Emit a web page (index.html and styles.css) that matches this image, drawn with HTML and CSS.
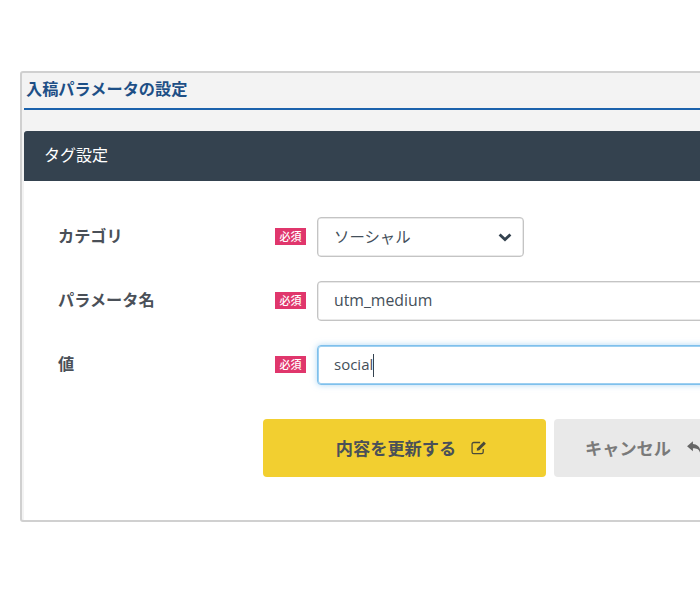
FILE: index.html
```html
<!DOCTYPE html>
<html lang="ja">
<head>
<meta charset="utf-8">
<title>入稿パラメータの設定</title>
<link rel="stylesheet" href="styles.css">
</head>
<body>
<main class="card">
  <h1 class="page-title">入稿パラメータの設定</h1>
  <section class="panel">
    <h2 class="panel-head">タグ設定</h2>
    <form class="panel-body">
      <div class="row">
        <span class="label">カテゴリ</span>
        <span class="badge">必須</span>
        <div class="control select">
          <span class="select-text">ソーシャル</span>
          <svg class="chevron" viewBox="0 0 14 10" width="14" height="10"><path d="M1.6 2.4 7 7.6l5.4-5.2" fill="none" stroke="#34424f" stroke-width="2.8"/></svg>
        </div>
      </div>
      <div class="row">
        <span class="label">パラメータ名</span>
        <span class="badge">必須</span>
        <div class="control wide">utm_medium</div>
      </div>
      <div class="row">
        <span class="label">値</span>
        <span class="badge">必須</span>
        <div class="control wide focus">social<span class="caret"></span></div>
      </div>
      <div class="actions">
        <button type="button" class="btn primary">内容を更新する
          <svg class="icon" viewBox="0 0 16 14" width="17" height="15"><path d="M11.5 8.5v2.7a1.6 1.6 0 0 1-1.6 1.6H2.6A1.6 1.6 0 0 1 1 11.2V3.9a1.6 1.6 0 0 1 1.6-1.6h6" fill="none" stroke="#4a4a3a" stroke-width="1.2"/><path d="M5.8 7.6 12 1.4l2 2-6.2 6.2-2.4.4z" fill="#4a4a3a"/></svg>
        </button>
        <button type="button" class="btn cancel">キャンセル
          <svg class="icon" viewBox="0 0 16 14" width="17" height="15"><path d="M6.5 1 1 5.8l5.5 4.8V7.8c3.6 0 5.6.8 6.8 4.2.6-4.8-1.8-8-6.8-8.4z" fill="#666"/></svg>
        </button>
      </div>
    </form>
  </section>
</main>
</body>
</html>
```
FILE: styles.css
```css
html, body {
  margin: 0;
  padding: 0;
  height: 600px;
  overflow: hidden;
  background: #fff;
}
body {
  padding: 71px 0 0 20px;
  box-sizing: border-box;
  font-family: "Open Sans", "Noto Sans CJK JP", sans-serif;
  color: #34424f;
}
.card {
  width: 900px;
  height: 451px;
  box-sizing: border-box;
  border: 2px solid #d0d0d0;
  border-radius: 3px 0 0 3px;
  background: #f3f3f3;
  padding: 0 0 0 2px;
  display: flex;
  flex-direction: column;
}
.page-title {
  margin: 0;
  height: 37px;
  box-sizing: border-box;
  border-bottom: 2px solid #1b62ac;
  padding-left: 2px;
  font-size: 16.2px;
  line-height: 32px;
  font-weight: 700;
  color: #1d4f86;
}
.panel {
  margin-top: 21px;
  flex: 1;
  display: flex;
  flex-direction: column;
  background: #fff;
}
.panel-head {
  margin: 0;
  height: 50px;
  padding-left: 20px;
  background: #34424f;
  border-radius: 3px 0 0 0;
  color: #fff;
  font-size: 16px;
  font-weight: 400;
  line-height: 48px;
}
.panel-body {
  display: flex;
  flex-direction: column;
  gap: 24px;
  padding: 36px 0 0 34px;
}
.row {
  display: flex;
  align-items: center;
  height: 40px;
}
.label {
  width: 217px;
  font-size: 16.2px;
  font-weight: 700;
  line-height: 36px;
  height: 38px;
  color: #4a5058;
}
.badge {
  width: 31px;
  height: 17px;
  margin: 0 11px 2px 0;
  background: #e0366c;
  color: #fff;
  font-size: 11px;
  font-weight: 500;
  line-height: 17px;
  text-align: center;
}
.control {
  height: 40px;
  box-sizing: border-box;
  border: 1px solid #c4c4c4;
  border-radius: 4px;
  padding: 0 0 2px 16px;
  display: flex;
  align-items: center;
  background: #fff;
  box-shadow: inset 0 0 0 .5px #d4d4d4;
  font-size: 15px;
  color: #444f5a;
}
.select {
  width: 207px;
  justify-content: space-between;
  padding-right: 11px;
}
.select-text {
  font-size: 15.4px;
}
.chevron {
  display: block;
  margin-top: 2px;
}
.wide {
  width: 520px;
  font-size: 15.8px;
}
.focus {
  border-color: #7fc0ec;
  font-size: 15px;
  box-shadow: inset 0 0 0 1px #9ed0f1, 0 0 6px rgba(127, 192, 236, .6);
}
.caret {
  width: 1px;
  height: 23px;
  margin-top: 2px;
  background: #34424f;
}
.actions {
  display: flex;
  gap: 8px;
  margin: 10px 0 0 205px;
}
.btn {
  height: 58px;
  border: 0;
  border-radius: 4px;
  padding: 0 0 2px;
  display: flex;
  align-items: center;
  justify-content: center;
  gap: 15px;
  font-family: inherit;
  font-size: 17.2px;
  font-weight: 700;
}
.primary {
  width: 283px;
  padding-left: 15px;
  background: #f2cf30;
  color: #4a5058;
}
.cancel {
  padding: 0 31px 2px;
  background: #e9e9e9;
  color: #7a7a7a;
}
.icon {
  display: block;
}
```
